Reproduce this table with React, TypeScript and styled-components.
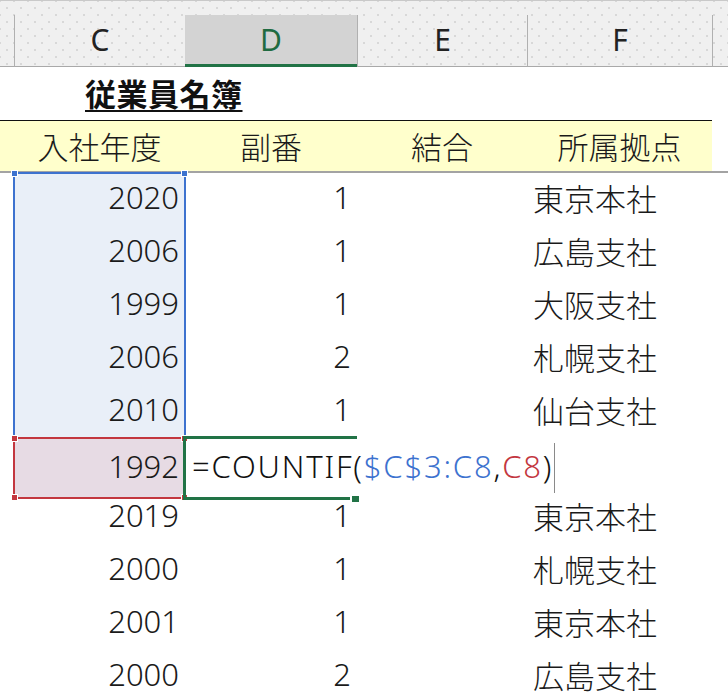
import React from "react";
import styled, { createGlobalStyle, css } from "styled-components";

const Global = createGlobalStyle`
  html, body { margin: 0; padding: 0; background: #ffffff; overflow: hidden; }
  body { font-family: "Noto Sans", "Noto Sans CJK JP", sans-serif; color: #1a1a1a; }
`;

const COLS = "14px 171px 172px 170px 185px 16px";
const FONT = `"Noto Sans", "Noto Sans CJK JP", sans-serif`;

const Sheet = styled.div`
  width: 728px;
  height: 699px;
  overflow: hidden;
  display: flex;
  flex-direction: column;
`;

const HeaderBar = styled.div`
  flex: none;
  display: grid;
  grid-template-columns: ${COLS};
  align-items: end;
  height: 67px;
  box-sizing: border-box;
  border-top: 1px solid #c9c9c9;
  background-color: #f0f0f0;
  background-image:
    radial-gradient(circle, #d8d8d8 0.9px, transparent 1.3px),
    radial-gradient(circle, #d8d8d8 0.9px, transparent 1.3px);
  background-size: 14px 14px, 14px 14px;
  background-position: 0 0, 7px 7px;
`;

const ColHead = styled.div<{ $selected?: boolean; $edge?: boolean }>`
  height: 52px;
  box-sizing: border-box;
  display: flex;
  align-items: center;
  justify-content: center;
  font-family: ${FONT};
  font-size: 30px;
  color: #222;
  border-left: ${(p) => (p.$edge ? "none" : "1px solid #b0b0b0")};
  border-bottom: 1px solid #a9a9a9;
  padding-bottom: 2px;
  ${(p) =>
    p.$selected &&
    css`
      background: #d3d3d3;
      color: #1f6b41;
      border-left: none;
      border-bottom: 3px solid #217346;
      padding-bottom: 0;
    `}
`;

const Row = styled.div<{ $h: number }>`
  display: grid;
  grid-template-columns: ${COLS};
  height: ${(p) => p.$h}px;
  flex: none;
`;

const TitleCell = styled.div`
  grid-column: 2 / span 3;
  display: flex;
  align-items: center;
  padding-left: 71px;
  padding-bottom: 3px;
  font-family: "Noto Sans CJK JP", sans-serif;
  font-size: 31px;
  font-weight: 700;
  color: #111;
  text-decoration: underline;
  text-decoration-thickness: 2px;
  text-underline-offset: 4px;
  letter-spacing: 0.5px;
`;

const LabelRow = styled(Row)`
  box-sizing: border-box;
  border-bottom: 2px solid #a3a3a3;
`;

const LabelCell = styled.div<{ $blank?: boolean }>`
  background: #ffffcc;
  border-top: 1px solid #111;
  display: flex;
  align-items: center;
  justify-content: center;
  padding-bottom: 2px;
  font-family: "Noto Sans CJK JP", sans-serif;
  font-weight: 300;
  font-size: 31px;
  color: #1a1a1a;
  ${(p) =>
    p.$blank &&
    css`
      background: #fff;
      border-top: none;
    `}
`;

const Cell = styled.div<{ $align?: "left" | "right" | "center"; $fill?: string }>`
  position: relative;
  display: flex;
  align-items: center;
  justify-content: ${(p) =>
    p.$align === "left" ? "flex-start" : p.$align === "center" ? "center" : "flex-end"};
  padding: ${(p) => (p.$align === "left" ? "0 0 5px 6px" : "0 6px 5px 0")};
  font-family: ${FONT};
  font-weight: 300;
  font-size: 31px;
  color: #1a1a1a;
  background: ${(p) => p.$fill ?? "transparent"};
  white-space: nowrap;
`;

const RangeFrame = styled.div<{ $top?: boolean; $bottom?: boolean; $color: string }>`
  position: absolute;
  inset: ${(p) => (p.$top ? "-1px" : "0")} -1px ${(p) => (p.$bottom ? "-1px" : "0")} -1px;
  border-left: 2px solid ${(p) => p.$color};
  border-right: 2px solid ${(p) => p.$color};
  border-top: ${(p) => (p.$top ? `2px solid ${p.$color}` : "none")};
  border-bottom: ${(p) => (p.$bottom ? `2px solid ${p.$color}` : "none")};
  pointer-events: none;
  z-index: 2;
`;

const Handle = styled.span<{ $color: string; $v: "top" | "bottom"; $h: "left" | "right" }>`
  position: absolute;
  width: 5px;
  height: 5px;
  background: ${(p) => p.$color};
  border: 1px solid #fff;
  ${(p) => (p.$v === "top" ? "top: -4px;" : "bottom: -4px;")}
  ${(p) => (p.$h === "left" ? "left: -4px;" : "right: -4px;")}
`;

const EditFrame = styled.div`
  position: absolute;
  inset: -2px 0 -2px -2px;
  border-top: 3px solid #217346;
  border-bottom: 3px solid #217346;
  border-left: 3px solid #217346;
  pointer-events: none;
  z-index: 3;
`;

const FillHandle = styled.span`
  position: absolute;
  right: -2px;
  bottom: -5px;
  width: 7px;
  height: 6px;
  background: #217346;
  border-left: 2px solid #fff;
`;

const Formula = styled.div`
  position: relative;
  z-index: 4;
  display: flex;
  align-items: center;
  padding-left: 1px;
  font-family: ${FONT};
  font-weight: 300;
  font-size: 31px;
  letter-spacing: 1.8px;
  color: #111;
`;

const Ref = styled.span<{ $c: string }>`
  color: ${(p) => p.$c};
`;

const Caret = styled.span`
  display: inline-block;
  width: 1px;
  height: 50px;
  margin-left: 1px;
  margin-top: 5px;
  background: #8a8a8a;
`;

type R = { year: number; sub?: number; place: string };

const data: R[] = [
  { year: 2020, sub: 1, place: "東京本社" },
  { year: 2006, sub: 1, place: "広島支社" },
  { year: 1999, sub: 1, place: "大阪支社" },
  { year: 2006, sub: 2, place: "札幌支社" },
  { year: 2010, sub: 1, place: "仙台支社" },
  { year: 1992, place: "" },
  { year: 2019, sub: 1, place: "東京本社" },
  { year: 2000, sub: 1, place: "札幌支社" },
  { year: 2001, sub: 1, place: "東京本社" },
  { year: 2000, sub: 2, place: "広島支社" },
];

const BLUE = "#3d72cf";
const RED = "#c3373f";

export default function App() {
  return (
    <>
      <Global />
      <Sheet>
        <HeaderBar>
          <ColHead $edge />
          <ColHead>C</ColHead>
          <ColHead $selected>D</ColHead>
          <ColHead>E</ColHead>
          <ColHead>F</ColHead>
          <ColHead />
        </HeaderBar>

        <Row $h={53}>
          <div />
          <TitleCell>従業員名簿</TitleCell>
        </Row>

        <LabelRow $h={53}>
          <LabelCell />
          <LabelCell>入社年度</LabelCell>
          <LabelCell>副番</LabelCell>
          <LabelCell>結合</LabelCell>
          <LabelCell>所属拠点</LabelCell>
          <LabelCell $blank />
        </LabelRow>

        {data.map((r, i) => {
          const inBlue = i < 5;
          const isActive = i === 5;
          return (
            <Row $h={53} key={i}>
              <div />
              <Cell
                $align="right"
                $fill={inBlue ? "#e9eff8" : isActive ? "#e7dbe4" : undefined}
              >
                {r.year}
                {inBlue && (
                  <RangeFrame $color={BLUE} $top={i === 0}>
                    {i === 0 && (
                      <>
                        <Handle $color={BLUE} $v="top" $h="left" />
                        <Handle $color={BLUE} $v="top" $h="right" />
                      </>
                    )}
                  </RangeFrame>
                )}
                {isActive && (
                  <RangeFrame $color={RED} $top $bottom>
                    <Handle $color={RED} $v="top" $h="left" />
                    <Handle $color={RED} $v="top" $h="right" />
                    <Handle $color={RED} $v="bottom" $h="left" />
                    <Handle $color={RED} $v="bottom" $h="right" />
                  </RangeFrame>
                )}
              </Cell>
              {isActive ? (
                <Cell $align="left">
                  <EditFrame>
                    <FillHandle />
                  </EditFrame>
                  <Formula>
                    =COUNTIF(<Ref $c={BLUE}>$C$3:C8</Ref>,<Ref $c={RED}>C8</Ref>)
                    <Caret />
                  </Formula>
                </Cell>
              ) : (
                <Cell $align="right">{r.sub}</Cell>
              )}
              <Cell />
              <Cell $align="left">{r.place}</Cell>
              <div />
            </Row>
          );
        })}
      </Sheet>
    </>
  );
}
